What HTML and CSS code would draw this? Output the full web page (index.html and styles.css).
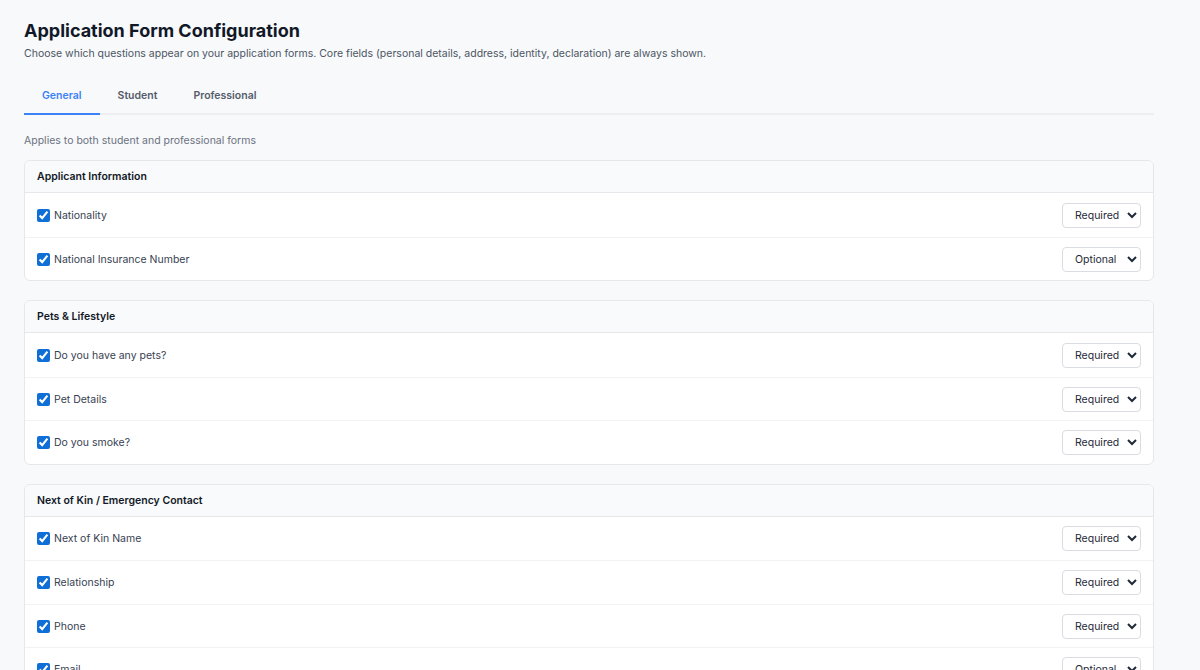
FILE: index.html
```html
<!DOCTYPE html>
<html>
<head lang="en">
    <meta charset="UTF-8">
    <title>Application Form Configuration</title>
    <link rel="stylesheet" href="styles.css">
</head>
<body>
<div class="page">
    <h1 class="title">Application Form Configuration</h1>
    <p class="subtitle">Choose which questions appear on your application forms. Core fields (personal details, address, identity, declaration) are always shown.</p>

    <ul class="tabs">
        <li class="tab active">General</li>
        <li class="tab">Student</li>
        <li class="tab">Professional</li>
    </ul>

    <p class="hint">Applies to both student and professional forms</p>

    <div class="card">
        <div class="card-head">Applicant Information</div>
        <div class="row">
            <label class="field"><input type="checkbox" checked> Nationality</label>
            <select class="mode"><option selected>Required</option><option>Optional</option></select>
        </div>
        <div class="row">
            <label class="field"><input type="checkbox" checked> National Insurance Number</label>
            <select class="mode"><option>Required</option><option selected>Optional</option></select>
        </div>
    </div>

    <div class="card">
        <div class="card-head">Pets &amp; Lifestyle</div>
        <div class="row">
            <label class="field"><input type="checkbox" checked> Do you have any pets?</label>
            <select class="mode"><option selected>Required</option><option>Optional</option></select>
        </div>
        <div class="row">
            <label class="field"><input type="checkbox" checked> Pet Details</label>
            <select class="mode"><option selected>Required</option><option>Optional</option></select>
        </div>
        <div class="row">
            <label class="field"><input type="checkbox" checked> Do you smoke?</label>
            <select class="mode"><option selected>Required</option><option>Optional</option></select>
        </div>
    </div>

    <div class="card">
        <div class="card-head">Next of Kin / Emergency Contact</div>
        <div class="row">
            <label class="field"><input type="checkbox" checked> Next of Kin Name</label>
            <select class="mode"><option selected>Required</option><option>Optional</option></select>
        </div>
        <div class="row">
            <label class="field"><input type="checkbox" checked> Relationship</label>
            <select class="mode"><option selected>Required</option><option>Optional</option></select>
        </div>
        <div class="row">
            <label class="field"><input type="checkbox" checked> Phone</label>
            <select class="mode"><option selected>Required</option><option>Optional</option></select>
        </div>
        <div class="row">
            <label class="field"><input type="checkbox" checked> Email</label>
            <select class="mode"><option>Required</option><option selected>Optional</option></select>
        </div>
    </div>
</div>
</body>
</html>
```

FILE: styles.css
```css
*{
    margin: 0;
    padding: 0;
    box-sizing: border-box;
}
ul,ol{
    list-style: none;
}
body{
    background: #f8f9fb;
    font-family: Inter, "Noto Sans", sans-serif;
    color: #1f2937;
}
.page{
    width: 1130px;
    padding: 17px 0 40px 0;
    margin-left: 24px;
}
.title{
    font-size: 18px;
    line-height: 28px;
    font-weight: 700;
    color: #111827;
}
.subtitle{
    font-size: 10.5px;
    line-height: 16px;
    color: #4b5563;
    margin-top: 1px;
}
.tabs{
    display: flex;
    border-bottom: 2px solid #eceef1;
    margin-top: 26px;
}
.tab{
    padding: 0 18px 9px 18px;
    font-size: 10.5px;
    line-height: 16px;
    font-weight: 600;
    color: #555d6b;
    margin-bottom: -2px;
    border-bottom: 2px solid transparent;
    cursor: pointer;
}
.tab.active{
    color: #3b82f6;
    border-bottom-color: #3b82f6;
}
.hint{
    font-size: 10.5px;
    line-height: 16px;
    color: #6b7280;
    margin-top: 18px;
}
.card{
    background: #ffffff;
    border: 1px solid #e5e7eb;
    border-radius: 6px;
    margin-top: 11px;
    overflow: hidden;
}
.card + .card{
    margin-top: 19px;
}
.card-head{
    background: #f9fafb;
    border-bottom: 1px solid #e5e7eb;
    padding: 0 12px;
    height: 32px;
    line-height: 31px;
    font-size: 10.5px;
    font-weight: 600;
    color: #111827;
}
.row{
    display: flex;
    align-items: center;
    justify-content: space-between;
    height: 43.5px;
    padding: 1px 12px 0 12px;
    border-top: 1px solid #f1f2f4;
}
.card-head + .row{
    border-top: none;
}
.field{
    display: flex;
    align-items: center;
    gap: 4px;
    font-size: 10.5px;
    color: #374151;
}
.field input{
    width: 13px;
    height: 13px;
    accent-color: #0f6fd6;
}
.mode{
    width: 79px;
    height: 25px;
    font-family: Inter, "Noto Sans", sans-serif;
    font-size: 10.5px;
    color: #1f2937;
    background: #ffffff;
    border: 1px solid #d9dce1;
    border-radius: 4px;
    padding: 0 0 0 8px;
}
```
